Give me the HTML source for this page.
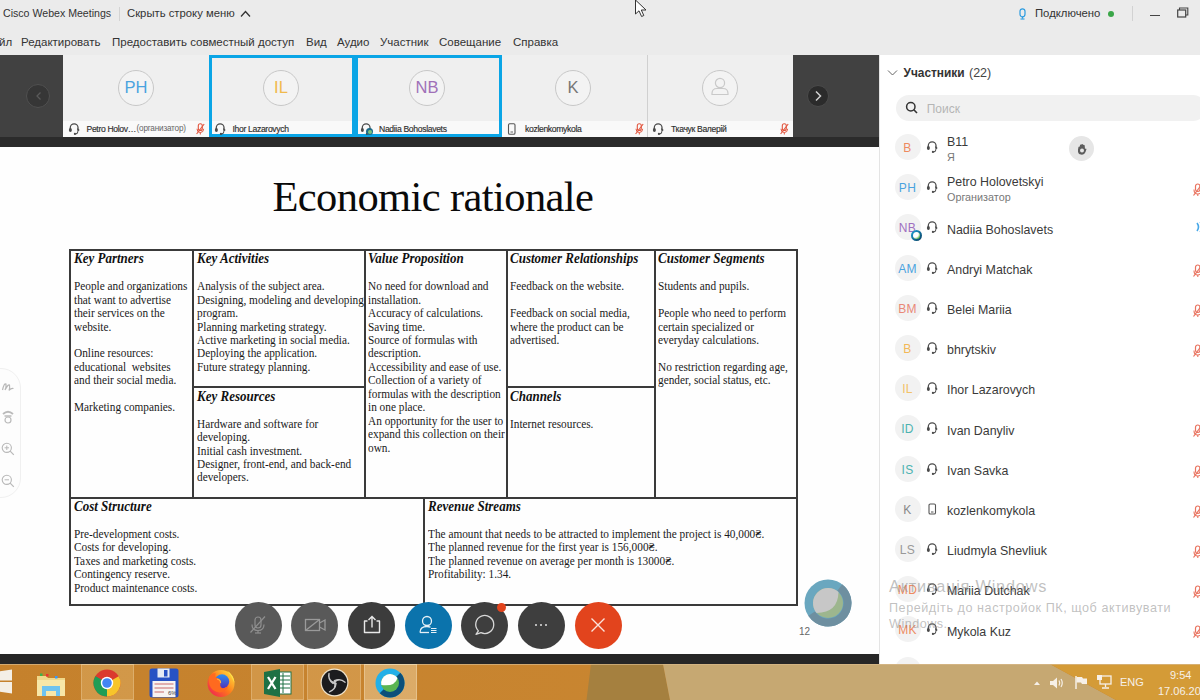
<!DOCTYPE html>
<html><head><meta charset="utf-8">
<style>
*{margin:0;padding:0;box-sizing:border-box}
html,body{width:1200px;height:700px;overflow:hidden;background:#ebebeb;font-family:"Liberation Sans",sans-serif;position:relative}
.a{position:absolute}
.t{position:absolute;white-space:nowrap;line-height:1}
/* title bar */
#titlebar{left:0;top:0;width:1200px;height:55px;background:#ebebeb}
/* thumbnails */
#strip{left:0;top:55px;width:879px;height:92px;background:#2b2b2b}
.thumb{position:absolute;top:0;height:82px;background:#efefef}
.thumb .lbl{position:absolute;left:0;right:0;bottom:0;height:16px;background:#f9f9f9}
.av{position:absolute;border-radius:50%;border:1px solid #c9c9c9;background:#f4f4f4;text-align:center;font-family:"Liberation Sans",sans-serif}
/* slide */
#slide{left:0;top:147px;width:879px;height:507px;background:#fefefe;overflow:hidden}
#bottomstrip{left:0;top:653.5px;width:879px;height:10.5px;background:#262626}
#panel{left:879px;top:55px;width:321px;height:609px;background:#fff;border-left:1px solid #e4e4e4}

.serif{font-family:"Liberation Serif",serif;color:#111}
.h{font:italic bold 13px/13px "Liberation Serif",serif;position:absolute;white-space:nowrap;color:#111;transform:scaleY(1.12);transform-origin:0 10.9px}
.b{font:11.3px/13px "Liberation Serif",serif;position:absolute;white-space:pre;color:#1a1a1a;transform:scaleY(1.1);transform-origin:0 10.31px}
.ln{position:absolute;background:#3a3a3a}
.btn{position:absolute;width:47px;height:47px;border-radius:50%}
.prow{position:absolute;left:0;width:321px;height:40px}
.pav{position:absolute;left:15px;width:26px;height:26px;border-radius:50%;background:#f2f2f2;text-align:center;font:12px/28.5px "Liberation Sans",sans-serif;letter-spacing:0.3px}
.pname{position:absolute;left:67px;font:12.6px "Liberation Sans",sans-serif;color:#333;white-space:nowrap}
</style></head><body>

<div id="titlebar" class="a">
  <div class="t" style="left:3px;top:8px;font-size:10.6px;color:#333">Cisco Webex Meetings</div>
  <div class="a" style="left:119px;top:6.5px;width:1px;height:14px;background:#d3d3d3"></div>
  <div class="t" style="left:127px;top:8px;font-size:11.3px;color:#333">Скрыть строку меню</div>
  <div class="t" style="left:-1px;top:37px;font-size:11.5px;color:#333">йл</div>
  <div class="t" style="left:21px;top:37px;font-size:11.5px;color:#333">Редактировать</div>
  <div class="t" style="left:112px;top:37px;font-size:11.5px;color:#333">Предоставить совместный доступ</div>
  <div class="t" style="left:306px;top:37px;font-size:11.5px;color:#333">Вид</div>
  <div class="t" style="left:337px;top:37px;font-size:11.5px;color:#333">Аудио</div>
  <div class="t" style="left:380px;top:37px;font-size:11.5px;color:#333">Участник</div>
  <div class="t" style="left:439px;top:37px;font-size:11.5px;color:#333">Совещание</div>
  <div class="t" style="left:513px;top:37px;font-size:11.5px;color:#333">Справка</div>
  <div class="t" style="left:1035px;top:8px;font-size:11.3px;color:#333">Подключено</div>
</div>

<div id="strip" class="a">
  <div class="thumb" style="left:63px;width:146px"><div class="lbl" style="height:16.5px"></div></div>
  <div class="thumb" style="left:209px;width:146px;border:3px solid #0aa5e6"><div class="lbl" style="height:13.5px"></div></div>
  <div class="thumb" style="left:355px;width:147px;border:3px solid #0aa5e6"><div class="lbl" style="height:13.5px"></div></div>
  <div class="thumb" style="left:502px;width:146px"><div class="lbl" style="height:16.5px"></div></div>
  <div class="thumb" style="left:648px;width:145px"><div class="lbl" style="height:16.5px"></div></div>
  <div class="a" style="left:793px;top:0;width:86px;height:82px;background:#414141"></div>
  <div class="a" style="left:0;top:0;width:63px;height:82px;background:#414141"></div>
</div>

<svg class="a" style="left:1018px;top:8px" width="9" height="12" viewBox="0 0 9 12"><rect x="2" y="0.8" width="5" height="8" rx="2.5" fill="none" stroke="#2a9be0" stroke-width="1.2"/><line x1="4.5" y1="8.8" x2="4.5" y2="10.6" stroke="#2a9be0" stroke-width="1.1"/><line x1="2.5" y1="11" x2="6.5" y2="11" stroke="#2a9be0" stroke-width="1.1"/></svg>
<div class="a" style="left:1108px;top:11px;width:6px;height:6px;border-radius:50%;background:#3aa648"></div>
<div class="a" style="left:1132px;top:6px;width:1px;height:15px;background:#d2d2d2"></div>
<div class="a" style="left:1149.5px;top:14.5px;width:10px;height:1.5px;background:#444"></div>
<svg class="a" style="left:1177px;top:6.5px" width="12" height="11" viewBox="0 0 12 11"><rect x="0.7" y="3" width="8" height="7" fill="none" stroke="#444" stroke-width="1.2"/><path d="M2.5 3 V1 H10.8 V8 H8.7" fill="none" stroke="#444" stroke-width="1.1"/></svg>
<svg class="a" style="left:240px;top:10px" width="11" height="8" viewBox="0 0 11 8"><path d="M1 6.5 L5.5 1.5 L10 6.5" fill="none" stroke="#333" stroke-width="1.3"/></svg>
<svg class="a" style="left:634px;top:-1px" width="14" height="20" viewBox="0 0 14 20"><path d="M1.5 1 L1.5 15 L5 11.8 L7.6 17.5 L9.8 16.5 L7.3 11 L12 11 Z" fill="#fff" stroke="#333" stroke-width="1"/></svg>
<div class="a" style="left:118px;top:69.5px;width:36px;height:36px;border-radius:50%;border:1.2px solid #c8c8c8;background:#f3f3f3"></div><div class="t" style="left:106px;width:60px;text-align:center;top:78.7px;font-size:16.5px;color:#4aa3df">PH</div>
<div class="a" style="left:263px;top:69.5px;width:36px;height:36px;border-radius:50%;border:1.2px solid #c8c8c8;background:#f3f3f3"></div><div class="t" style="left:251px;width:60px;text-align:center;top:78.7px;font-size:16.5px;color:#f0b94d">IL</div>
<div class="a" style="left:409px;top:69.5px;width:36px;height:36px;border-radius:50%;border:1.2px solid #c8c8c8;background:#f3f3f3"></div><div class="t" style="left:397px;width:60px;text-align:center;top:78.7px;font-size:16.5px;color:#a070b8">NB</div>
<div class="a" style="left:555px;top:69.5px;width:36px;height:36px;border-radius:50%;border:1.2px solid #c8c8c8;background:#f3f3f3"></div><div class="t" style="left:543px;width:60px;text-align:center;top:78.7px;font-size:16.5px;color:#777">K</div>
<div class="a" style="left:702px;top:69.5px;width:36px;height:36px;border-radius:50%;border:1.2px solid #c8c8c8;background:#f3f3f3"></div>
<svg class="a" style="left:708px;top:75px" width="24" height="24" viewBox="0 0 24 24"><circle cx="12" cy="8" r="4.6" fill="none" stroke="#c9c9c9" stroke-width="1.2"/><path d="M4 18.5 Q4 13.5 9 13.5 H15 Q20 13.5 20 18.5 V19.5 H4 Z" fill="none" stroke="#c9c9c9" stroke-width="1.2"/></svg>
<svg class="a" style="left:68.0px;top:122.0px" width="12" height="13" viewBox="0 0 12 13"><path d="M2.3 8.5 V5.6 A3.85 3.85 0 0 1 10 5.6 V8" fill="none" stroke="#4a4a4a" stroke-width="1.25"/><ellipse cx="2.4" cy="8" rx="1.5" ry="2.1" fill="#4a4a4a"/><path d="M9.4 6 L11.7 8 L9.4 10 Z" fill="#4a4a4a"/><path d="M10 9.5 Q9.6 11.8 7.2 12" fill="none" stroke="#4a4a4a" stroke-width="1.1"/><circle cx="6.9" cy="11.9" r="1.1" fill="#4a4a4a"/></svg><div class="t" style="left:86.5px;top:125px;font-size:8.6px;letter-spacing:-0.33px;color:#2e2e2e;-webkit-text-stroke:0.15px #2e2e2e">Petro Holov…</div>
<div class="t" style="left:136.5px;top:125px;font-size:8.2px;letter-spacing:-0.2px;color:#666">(организатор)</div>
<svg class="a" style="left:196px;top:123px" width="9" height="12" viewBox="0 0 9 12"><rect x="2.3" y="0.8" width="4" height="6.6" rx="2" fill="none" stroke="#e2563f" stroke-width="1.1"/><path d="M1 5.8 Q1 9.5 4.3 9.5 Q7.6 9.5 7.6 5.8" fill="none" stroke="#e2563f" stroke-width="1"/><line x1="4.3" y1="9.5" x2="4.3" y2="11.5" stroke="#e2563f" stroke-width="1"/><line x1="0.6" y1="11" x2="8.2" y2="1" stroke="#e2563f" stroke-width="1.1"/></svg>
<svg class="a" style="left:214.0px;top:122.0px" width="12" height="13" viewBox="0 0 12 13"><path d="M2.3 8.5 V5.6 A3.85 3.85 0 0 1 10 5.6 V8" fill="none" stroke="#4a4a4a" stroke-width="1.25"/><ellipse cx="2.4" cy="8" rx="1.5" ry="2.1" fill="#4a4a4a"/><path d="M9.4 6 L11.7 8 L9.4 10 Z" fill="#4a4a4a"/><path d="M10 9.5 Q9.6 11.8 7.2 12" fill="none" stroke="#4a4a4a" stroke-width="1.1"/><circle cx="6.9" cy="11.9" r="1.1" fill="#4a4a4a"/></svg><div class="t" style="left:232.5px;top:125px;font-size:8.6px;letter-spacing:-0.33px;color:#2e2e2e;-webkit-text-stroke:0.15px #2e2e2e">Ihor Lazarovych</div>

<svg class="a" style="left:360.0px;top:122.0px" width="12" height="13" viewBox="0 0 12 13"><path d="M2.3 8.5 V5.6 A3.85 3.85 0 0 1 10 5.6 V8" fill="none" stroke="#4a4a4a" stroke-width="1.25"/><ellipse cx="2.4" cy="8" rx="1.5" ry="2.1" fill="#4a4a4a"/><path d="M9.4 6 L11.7 8 L9.4 10 Z" fill="#4a4a4a"/><path d="M10 9.5 Q9.6 11.8 7.2 12" fill="none" stroke="#4a4a4a" stroke-width="1.1"/><circle cx="6.9" cy="11.9" r="1.1" fill="#4a4a4a"/></svg><div class="a" style="left:366px;top:128px;width:7px;height:7px;border-radius:50%;background:#1c6b8a"></div><div class="a" style="left:367.5px;top:129.5px;width:4px;height:4px;border-radius:50%;background:#7cc27c"></div><div class="t" style="left:379px;top:125px;font-size:8.6px;letter-spacing:-0.33px;color:#2e2e2e;-webkit-text-stroke:0.15px #2e2e2e">Nadiia Bohoslavets</div>

<svg class="a" style="left:507px;top:123px" width="10" height="12" viewBox="0 0 10 12"><rect x="1.5" y="0.8" width="6.5" height="10.4" rx="1.3" fill="none" stroke="#555" stroke-width="1.1"/><line x1="3.5" y1="9" x2="6" y2="9" stroke="#555" stroke-width="0.9"/></svg><div class="t" style="left:525px;top:125px;font-size:8.6px;letter-spacing:-0.33px;color:#2e2e2e;-webkit-text-stroke:0.15px #2e2e2e">kozlenkomykola</div>
<svg class="a" style="left:634.5px;top:123px" width="9" height="12" viewBox="0 0 9 12"><rect x="2.3" y="0.8" width="4" height="6.6" rx="2" fill="none" stroke="#e2563f" stroke-width="1.1"/><path d="M1 5.8 Q1 9.5 4.3 9.5 Q7.6 9.5 7.6 5.8" fill="none" stroke="#e2563f" stroke-width="1"/><line x1="4.3" y1="9.5" x2="4.3" y2="11.5" stroke="#e2563f" stroke-width="1"/><line x1="0.6" y1="11" x2="8.2" y2="1" stroke="#e2563f" stroke-width="1.1"/></svg>
<svg class="a" style="left:652.0px;top:122.0px" width="12" height="13" viewBox="0 0 12 13"><path d="M2.3 8.5 V5.6 A3.85 3.85 0 0 1 10 5.6 V8" fill="none" stroke="#4a4a4a" stroke-width="1.25"/><ellipse cx="2.4" cy="8" rx="1.5" ry="2.1" fill="#4a4a4a"/><path d="M9.4 6 L11.7 8 L9.4 10 Z" fill="#4a4a4a"/><path d="M10 9.5 Q9.6 11.8 7.2 12" fill="none" stroke="#4a4a4a" stroke-width="1.1"/><circle cx="6.9" cy="11.9" r="1.1" fill="#4a4a4a"/></svg><div class="t" style="left:671px;top:125px;font-size:8.6px;letter-spacing:-0.33px;color:#2e2e2e;-webkit-text-stroke:0.15px #2e2e2e">Ткачук Валерій</div>
<svg class="a" style="left:780px;top:123px" width="9" height="12" viewBox="0 0 9 12"><rect x="2.3" y="0.8" width="4" height="6.6" rx="2" fill="none" stroke="#e2563f" stroke-width="1.1"/><path d="M1 5.8 Q1 9.5 4.3 9.5 Q7.6 9.5 7.6 5.8" fill="none" stroke="#e2563f" stroke-width="1"/><line x1="4.3" y1="9.5" x2="4.3" y2="11.5" stroke="#e2563f" stroke-width="1"/><line x1="0.6" y1="11" x2="8.2" y2="1" stroke="#e2563f" stroke-width="1.1"/></svg>
<div class="a" style="left:647px;top:55px;width:1px;height:82px;background:#d0d0d0"></div>
<div class="a" style="left:26.3px;top:83.6px;width:24px;height:24px;border-radius:50%;background:#363636;border:1px solid #505050"></div><svg class="a" style="left:33.5px;top:91px" width="10" height="10" viewBox="0 0 10 10"><path d="M6.5 1.5 L3 5 L6.5 8.5" fill="none" stroke="#5a5a5a" stroke-width="1.3"/></svg>
<div class="a" style="left:806.5px;top:84.7px;width:22px;height:22px;border-radius:50%;background:#2b2b2b;border:1px solid #4a4a4a"></div><svg class="a" style="left:813px;top:91px" width="10" height="10" viewBox="0 0 10 10"><path d="M3 0.5 L7.5 5 L3 9.5" fill="none" stroke="#cfcfcf" stroke-width="1.5"/></svg>
<div id="slide" class="a">
</div>
<div id="sl">
<div class="t serif" style="left:272.5px;top:176.1px;font-size:42.5px;letter-spacing:-0.6px;color:#0a0a0a">Economic rationale</div>
<div class="ln" style="left:70px;top:249px;width:728px;height:2px"></div>
<div class="ln" style="left:70px;top:496.8px;width:728px;height:1.9px"></div>
<div class="ln" style="left:70px;top:604.3px;width:728px;height:1.9px"></div>
<div class="ln" style="left:69.4px;top:249px;width:1.9px;height:357px"></div>
<div class="ln" style="left:796px;top:249px;width:2px;height:357px"></div>
<div class="ln" style="left:192px;top:249px;width:2px;height:248px"></div>
<div class="ln" style="left:364px;top:249px;width:2px;height:248px"></div>
<div class="ln" style="left:506px;top:249px;width:2px;height:248px"></div>
<div class="ln" style="left:654px;top:249px;width:2px;height:248px"></div>
<div class="ln" style="left:423px;top:497px;width:2px;height:108px"></div>
<div class="ln" style="left:193px;top:386px;width:172px;height:1.6px"></div>
<div class="ln" style="left:507px;top:386px;width:148px;height:1.6px"></div>
<div class="h" style="left:74px;top:252.20px">Key Partners</div>
<div class="b" style="left:74px;top:280.19px">People and organizations</div>
<div class="b" style="left:74px;top:293.64px">that want to advertise</div>
<div class="b" style="left:74px;top:307.09px">their services on the</div>
<div class="b" style="left:74px;top:320.54px">website.</div>
<div class="b" style="left:74px;top:347.44px">Online resources:</div>
<div class="b" style="left:74px;top:360.89px">educational  websites</div>
<div class="b" style="left:74px;top:374.34px">and their social media.</div>
<div class="b" style="left:74px;top:401.24px">Marketing companies.</div>
<div class="h" style="left:197px;top:252.20px">Key Activities</div>
<div class="b" style="left:197px;top:280.19px">Analysis of the subject area.</div>
<div class="b" style="left:197px;top:293.64px">Designing, modeling and developing</div>
<div class="b" style="left:197px;top:307.09px">program.</div>
<div class="b" style="left:197px;top:320.54px">Planning marketing strategy.</div>
<div class="b" style="left:197px;top:333.99px">Active marketing in social media.</div>
<div class="b" style="left:197px;top:347.44px">Deploying the application.</div>
<div class="b" style="left:197px;top:360.89px">Future strategy planning.</div>
<div class="h" style="left:197px;top:389.60px">Key Resources</div>
<div class="b" style="left:197px;top:417.69px">Hardware and software for</div>
<div class="b" style="left:197px;top:431.14px">developing.</div>
<div class="b" style="left:197px;top:444.59px">Initial cash investment.</div>
<div class="b" style="left:197px;top:458.04px">Designer, front-end, and back-end</div>
<div class="b" style="left:197px;top:471.49px">developers.</div>
<div class="h" style="left:368px;top:252.20px">Value Proposition</div>
<div class="b" style="left:368px;top:280.19px">No need for download and</div>
<div class="b" style="left:368px;top:293.64px">installation.</div>
<div class="b" style="left:368px;top:307.09px">Accuracy of calculations.</div>
<div class="b" style="left:368px;top:320.54px">Saving time.</div>
<div class="b" style="left:368px;top:333.99px">Source of formulas with</div>
<div class="b" style="left:368px;top:347.44px">description.</div>
<div class="b" style="left:368px;top:360.89px">Accessibility and ease of use.</div>
<div class="b" style="left:368px;top:374.34px">Collection of a variety of</div>
<div class="b" style="left:368px;top:387.79px">formulas with the description</div>
<div class="b" style="left:368px;top:401.24px">in one place.</div>
<div class="b" style="left:368px;top:414.69px">An opportunity for the user to</div>
<div class="b" style="left:368px;top:428.14px">expand this collection on their</div>
<div class="b" style="left:368px;top:441.59px">own.</div>
<div class="h" style="left:510px;top:252.20px">Customer Relationships</div>
<div class="b" style="left:510px;top:280.19px">Feedback on the website.</div>
<div class="b" style="left:510px;top:307.09px">Feedback on social media,</div>
<div class="b" style="left:510px;top:320.54px">where the product can be</div>
<div class="b" style="left:510px;top:333.99px">advertised.</div>
<div class="h" style="left:510px;top:389.60px">Channels</div>
<div class="b" style="left:510px;top:417.69px">Internet resources.</div>
<div class="h" style="left:658px;top:252.20px">Customer Segments</div>
<div class="b" style="left:658px;top:280.19px">Students and pupils.</div>
<div class="b" style="left:658px;top:307.09px">People who need to perform</div>
<div class="b" style="left:658px;top:320.54px">certain specialized or</div>
<div class="b" style="left:658px;top:333.99px">everyday calculations.</div>
<div class="b" style="left:658px;top:360.89px">No restriction regarding age,</div>
<div class="b" style="left:658px;top:374.34px">gender, social status, etc.</div>
<div class="h" style="left:74px;top:499.80px">Cost Structure</div>
<div class="b" style="left:74px;top:527.89px">Pre-development costs.</div>
<div class="b" style="left:74px;top:541.34px">Costs for developing.</div>
<div class="b" style="left:74px;top:554.79px">Taxes and marketing costs.</div>
<div class="b" style="left:74px;top:568.24px">Contingency reserve.</div>
<div class="b" style="left:74px;top:581.69px">Product maintenance costs.</div>
<div class="h" style="left:428px;top:499.80px">Revenue Streams</div>
<div class="b" style="left:428px;top:527.89px">The amount that needs to be attracted to implement the project is 40,000₴.</div>
<div class="b" style="left:428px;top:541.34px">The planned revenue for the first year is 156,000₴.</div>
<div class="b" style="left:428px;top:554.79px">The planned revenue on average per month is 13000₴.</div>
<div class="b" style="left:428px;top:568.24px">Profitability: 1.34.</div>
<div class="t" style="left:799px;top:627px;font-size:10px;color:#666">12</div>
</div>
<div id="bottomstrip" class="a"></div>

<div id="panel" class="a">
</div>
<div id="pn">
<svg class="a" style="left:887px;top:69px" width="11" height="8" viewBox="0 0 11 8"><path d="M1 1.5 L5.5 6 L10 1.5" fill="none" stroke="#666" stroke-width="1"/></svg>
<div class="t" style="left:903.5px;top:67.6px;font-size:11.9px;font-weight:bold;color:#333">Участники</div><div class="t" style="left:969px;top:67.3px;font-size:12.5px;color:#444">(22)</div>
<div class="a" style="left:896px;top:95px;width:310px;height:26px;border-radius:13px;background:#f1f1f1"></div>
<svg class="a" style="left:905px;top:101px" width="14" height="14" viewBox="0 0 14 14"><circle cx="5.8" cy="5.8" r="4.2" fill="none" stroke="#333" stroke-width="1.5"/><line x1="8.8" y1="8.8" x2="12" y2="12" stroke="#333" stroke-width="1.6"/></svg>
<div class="t" style="left:926.7px;top:103px;font-size:12px;color:#b5b5b5">Поиск</div>
<div class="pav" style="left:894.5px;top:134.0px;color:#ee8a5f">B</div>
<svg class="a" style="left:925.5px;top:140.0px" width="12" height="13" viewBox="0 0 12 13"><path d="M2.3 8.5 V5.6 A3.85 3.85 0 0 1 10 5.6 V8" fill="none" stroke="#4a4a4a" stroke-width="1.25"/><ellipse cx="2.4" cy="8" rx="1.5" ry="2.1" fill="#4a4a4a"/><path d="M9.4 6 L11.7 8 L9.4 10 Z" fill="#4a4a4a"/><path d="M10 9.5 Q9.6 11.8 7.2 12" fill="none" stroke="#4a4a4a" stroke-width="1.1"/><circle cx="6.9" cy="11.9" r="1.1" fill="#4a4a4a"/></svg>
<div class="t" style="left:947px;top:135.6px;font-size:12.4px;color:#3a3a3a">B11</div>
<div class="t" style="left:947px;top:151.6px;font-size:10.8px;color:#777">Я</div>
<div class="pav" style="left:894.5px;top:174.2px;color:#4aa3df">PH</div>
<svg class="a" style="left:925.5px;top:180.0px" width="12" height="13" viewBox="0 0 12 13"><path d="M2.3 8.5 V5.6 A3.85 3.85 0 0 1 10 5.6 V8" fill="none" stroke="#4a4a4a" stroke-width="1.25"/><ellipse cx="2.4" cy="8" rx="1.5" ry="2.1" fill="#4a4a4a"/><path d="M9.4 6 L11.7 8 L9.4 10 Z" fill="#4a4a4a"/><path d="M10 9.5 Q9.6 11.8 7.2 12" fill="none" stroke="#4a4a4a" stroke-width="1.1"/><circle cx="6.9" cy="11.9" r="1.1" fill="#4a4a4a"/></svg>
<div class="t" style="left:947px;top:175.8px;font-size:12.4px;color:#3a3a3a">Petro Holovetskyi</div>
<div class="t" style="left:947px;top:191.8px;font-size:10.8px;color:#777">Организатор</div>
<svg class="a" style="left:1193px;top:183px" width="10" height="14" viewBox="0 0 10 14"><rect x="2.5" y="1" width="4.5" height="7.5" rx="2.2" fill="none" stroke="#e9735f" stroke-width="1.2"/><path d="M1 6.5 Q1 11 4.8 11 Q8.5 11 8.5 6.5" fill="none" stroke="#e9735f" stroke-width="1.1"/><line x1="4.8" y1="11" x2="4.8" y2="13" stroke="#e9735f" stroke-width="1.1"/><line x1="0.5" y1="12.5" x2="9" y2="1" stroke="#e9735f" stroke-width="1.2"/></svg>
<div class="pav" style="left:894.5px;top:214.4px;color:#a070c0">NB</div>
<svg class="a" style="left:925.5px;top:220.0px" width="12" height="13" viewBox="0 0 12 13"><path d="M2.3 8.5 V5.6 A3.85 3.85 0 0 1 10 5.6 V8" fill="none" stroke="#4a4a4a" stroke-width="1.25"/><ellipse cx="2.4" cy="8" rx="1.5" ry="2.1" fill="#4a4a4a"/><path d="M9.4 6 L11.7 8 L9.4 10 Z" fill="#4a4a4a"/><path d="M10 9.5 Q9.6 11.8 7.2 12" fill="none" stroke="#4a4a4a" stroke-width="1.1"/><circle cx="6.9" cy="11.9" r="1.1" fill="#4a4a4a"/></svg>
<div class="t" style="left:947px;top:223.6px;font-size:12.4px;color:#3a3a3a">Nadiia Bohoslavets</div>
<svg class="a" style="left:1195px;top:221px" width="8" height="12" viewBox="0 0 8 12"><path d="M2 2 Q5 6 2 10" fill="none" stroke="#48a8e8" stroke-width="1.6"/><path d="M5 1 Q8.5 6 5 11" fill="none" stroke="#48a8e8" stroke-width="1.3"/></svg>
<div class="pav" style="left:894.5px;top:254.6px;color:#4aa3df">AM</div>
<svg class="a" style="left:925.5px;top:261.0px" width="12" height="13" viewBox="0 0 12 13"><path d="M2.3 8.5 V5.6 A3.85 3.85 0 0 1 10 5.6 V8" fill="none" stroke="#4a4a4a" stroke-width="1.25"/><ellipse cx="2.4" cy="8" rx="1.5" ry="2.1" fill="#4a4a4a"/><path d="M9.4 6 L11.7 8 L9.4 10 Z" fill="#4a4a4a"/><path d="M10 9.5 Q9.6 11.8 7.2 12" fill="none" stroke="#4a4a4a" stroke-width="1.1"/><circle cx="6.9" cy="11.9" r="1.1" fill="#4a4a4a"/></svg>
<div class="t" style="left:947px;top:263.8px;font-size:12.4px;color:#3a3a3a">Andryi Matchak</div>
<svg class="a" style="left:1193px;top:264px" width="10" height="14" viewBox="0 0 10 14"><rect x="2.5" y="1" width="4.5" height="7.5" rx="2.2" fill="none" stroke="#e9735f" stroke-width="1.2"/><path d="M1 6.5 Q1 11 4.8 11 Q8.5 11 8.5 6.5" fill="none" stroke="#e9735f" stroke-width="1.1"/><line x1="4.8" y1="11" x2="4.8" y2="13" stroke="#e9735f" stroke-width="1.1"/><line x1="0.5" y1="12.5" x2="9" y2="1" stroke="#e9735f" stroke-width="1.2"/></svg>
<div class="pav" style="left:894.5px;top:294.8px;color:#e98877">BM</div>
<svg class="a" style="left:925.5px;top:301.0px" width="12" height="13" viewBox="0 0 12 13"><path d="M2.3 8.5 V5.6 A3.85 3.85 0 0 1 10 5.6 V8" fill="none" stroke="#4a4a4a" stroke-width="1.25"/><ellipse cx="2.4" cy="8" rx="1.5" ry="2.1" fill="#4a4a4a"/><path d="M9.4 6 L11.7 8 L9.4 10 Z" fill="#4a4a4a"/><path d="M10 9.5 Q9.6 11.8 7.2 12" fill="none" stroke="#4a4a4a" stroke-width="1.1"/><circle cx="6.9" cy="11.9" r="1.1" fill="#4a4a4a"/></svg>
<div class="t" style="left:947px;top:304.0px;font-size:12.4px;color:#3a3a3a">Belei Mariia</div>
<svg class="a" style="left:1193px;top:304px" width="10" height="14" viewBox="0 0 10 14"><rect x="2.5" y="1" width="4.5" height="7.5" rx="2.2" fill="none" stroke="#e9735f" stroke-width="1.2"/><path d="M1 6.5 Q1 11 4.8 11 Q8.5 11 8.5 6.5" fill="none" stroke="#e9735f" stroke-width="1.1"/><line x1="4.8" y1="11" x2="4.8" y2="13" stroke="#e9735f" stroke-width="1.1"/><line x1="0.5" y1="12.5" x2="9" y2="1" stroke="#e9735f" stroke-width="1.2"/></svg>
<div class="pav" style="left:894.5px;top:335.0px;color:#f2b857">B</div>
<svg class="a" style="left:925.5px;top:341.0px" width="12" height="13" viewBox="0 0 12 13"><path d="M2.3 8.5 V5.6 A3.85 3.85 0 0 1 10 5.6 V8" fill="none" stroke="#4a4a4a" stroke-width="1.25"/><ellipse cx="2.4" cy="8" rx="1.5" ry="2.1" fill="#4a4a4a"/><path d="M9.4 6 L11.7 8 L9.4 10 Z" fill="#4a4a4a"/><path d="M10 9.5 Q9.6 11.8 7.2 12" fill="none" stroke="#4a4a4a" stroke-width="1.1"/><circle cx="6.9" cy="11.9" r="1.1" fill="#4a4a4a"/></svg>
<div class="t" style="left:947px;top:344.2px;font-size:12.4px;color:#3a3a3a">bhrytskiv</div>
<svg class="a" style="left:1193px;top:344px" width="10" height="14" viewBox="0 0 10 14"><rect x="2.5" y="1" width="4.5" height="7.5" rx="2.2" fill="none" stroke="#e9735f" stroke-width="1.2"/><path d="M1 6.5 Q1 11 4.8 11 Q8.5 11 8.5 6.5" fill="none" stroke="#e9735f" stroke-width="1.1"/><line x1="4.8" y1="11" x2="4.8" y2="13" stroke="#e9735f" stroke-width="1.1"/><line x1="0.5" y1="12.5" x2="9" y2="1" stroke="#e9735f" stroke-width="1.2"/></svg>
<div class="pav" style="left:894.5px;top:375.2px;color:#f2c268">IL</div>
<svg class="a" style="left:925.5px;top:381.0px" width="12" height="13" viewBox="0 0 12 13"><path d="M2.3 8.5 V5.6 A3.85 3.85 0 0 1 10 5.6 V8" fill="none" stroke="#4a4a4a" stroke-width="1.25"/><ellipse cx="2.4" cy="8" rx="1.5" ry="2.1" fill="#4a4a4a"/><path d="M9.4 6 L11.7 8 L9.4 10 Z" fill="#4a4a4a"/><path d="M10 9.5 Q9.6 11.8 7.2 12" fill="none" stroke="#4a4a4a" stroke-width="1.1"/><circle cx="6.9" cy="11.9" r="1.1" fill="#4a4a4a"/></svg>
<div class="t" style="left:947px;top:384.4px;font-size:12.4px;color:#3a3a3a">Ihor Lazarovych</div>
<div class="pav" style="left:894.5px;top:415.4px;color:#4db3b0">ID</div>
<svg class="a" style="left:925.5px;top:421.0px" width="12" height="13" viewBox="0 0 12 13"><path d="M2.3 8.5 V5.6 A3.85 3.85 0 0 1 10 5.6 V8" fill="none" stroke="#4a4a4a" stroke-width="1.25"/><ellipse cx="2.4" cy="8" rx="1.5" ry="2.1" fill="#4a4a4a"/><path d="M9.4 6 L11.7 8 L9.4 10 Z" fill="#4a4a4a"/><path d="M10 9.5 Q9.6 11.8 7.2 12" fill="none" stroke="#4a4a4a" stroke-width="1.1"/><circle cx="6.9" cy="11.9" r="1.1" fill="#4a4a4a"/></svg>
<div class="t" style="left:947px;top:424.6px;font-size:12.4px;color:#3a3a3a">Ivan Danyliv</div>
<svg class="a" style="left:1193px;top:424px" width="10" height="14" viewBox="0 0 10 14"><rect x="2.5" y="1" width="4.5" height="7.5" rx="2.2" fill="none" stroke="#e9735f" stroke-width="1.2"/><path d="M1 6.5 Q1 11 4.8 11 Q8.5 11 8.5 6.5" fill="none" stroke="#e9735f" stroke-width="1.1"/><line x1="4.8" y1="11" x2="4.8" y2="13" stroke="#e9735f" stroke-width="1.1"/><line x1="0.5" y1="12.5" x2="9" y2="1" stroke="#e9735f" stroke-width="1.2"/></svg>
<div class="pav" style="left:894.5px;top:455.6px;color:#4db3b0">IS</div>
<svg class="a" style="left:925.5px;top:462.0px" width="12" height="13" viewBox="0 0 12 13"><path d="M2.3 8.5 V5.6 A3.85 3.85 0 0 1 10 5.6 V8" fill="none" stroke="#4a4a4a" stroke-width="1.25"/><ellipse cx="2.4" cy="8" rx="1.5" ry="2.1" fill="#4a4a4a"/><path d="M9.4 6 L11.7 8 L9.4 10 Z" fill="#4a4a4a"/><path d="M10 9.5 Q9.6 11.8 7.2 12" fill="none" stroke="#4a4a4a" stroke-width="1.1"/><circle cx="6.9" cy="11.9" r="1.1" fill="#4a4a4a"/></svg>
<div class="t" style="left:947px;top:464.8px;font-size:12.4px;color:#3a3a3a">Ivan Savka</div>
<svg class="a" style="left:1193px;top:465px" width="10" height="14" viewBox="0 0 10 14"><rect x="2.5" y="1" width="4.5" height="7.5" rx="2.2" fill="none" stroke="#e9735f" stroke-width="1.2"/><path d="M1 6.5 Q1 11 4.8 11 Q8.5 11 8.5 6.5" fill="none" stroke="#e9735f" stroke-width="1.1"/><line x1="4.8" y1="11" x2="4.8" y2="13" stroke="#e9735f" stroke-width="1.1"/><line x1="0.5" y1="12.5" x2="9" y2="1" stroke="#e9735f" stroke-width="1.2"/></svg>
<div class="pav" style="left:894.5px;top:495.8px;color:#888888">K</div>
<svg class="a" style="left:925.5px;top:503px" width="12" height="12" viewBox="0 0 12 12"><rect x="3" y="1" width="6.5" height="10" rx="1.3" fill="none" stroke="#555" stroke-width="1.1"/><line x1="5" y1="9" x2="7.5" y2="9" stroke="#555" stroke-width="1"/></svg>
<div class="t" style="left:947px;top:505.0px;font-size:12.4px;color:#3a3a3a">kozlenkomykola</div>
<svg class="a" style="left:1193px;top:505px" width="10" height="14" viewBox="0 0 10 14"><rect x="2.5" y="1" width="4.5" height="7.5" rx="2.2" fill="none" stroke="#e9735f" stroke-width="1.2"/><path d="M1 6.5 Q1 11 4.8 11 Q8.5 11 8.5 6.5" fill="none" stroke="#e9735f" stroke-width="1.1"/><line x1="4.8" y1="11" x2="4.8" y2="13" stroke="#e9735f" stroke-width="1.1"/><line x1="0.5" y1="12.5" x2="9" y2="1" stroke="#e9735f" stroke-width="1.2"/></svg>
<div class="pav" style="left:894.5px;top:536.0px;color:#999999">LS</div>
<svg class="a" style="left:925.5px;top:542.0px" width="12" height="13" viewBox="0 0 12 13"><path d="M2.3 8.5 V5.6 A3.85 3.85 0 0 1 10 5.6 V8" fill="none" stroke="#4a4a4a" stroke-width="1.25"/><ellipse cx="2.4" cy="8" rx="1.5" ry="2.1" fill="#4a4a4a"/><path d="M9.4 6 L11.7 8 L9.4 10 Z" fill="#4a4a4a"/><path d="M10 9.5 Q9.6 11.8 7.2 12" fill="none" stroke="#4a4a4a" stroke-width="1.1"/><circle cx="6.9" cy="11.9" r="1.1" fill="#4a4a4a"/></svg>
<div class="t" style="left:947px;top:545.2px;font-size:12.4px;color:#3a3a3a">Liudmyla Shevliuk</div>
<svg class="a" style="left:1193px;top:545px" width="10" height="14" viewBox="0 0 10 14"><rect x="2.5" y="1" width="4.5" height="7.5" rx="2.2" fill="none" stroke="#e9735f" stroke-width="1.2"/><path d="M1 6.5 Q1 11 4.8 11 Q8.5 11 8.5 6.5" fill="none" stroke="#e9735f" stroke-width="1.1"/><line x1="4.8" y1="11" x2="4.8" y2="13" stroke="#e9735f" stroke-width="1.1"/><line x1="0.5" y1="12.5" x2="9" y2="1" stroke="#e9735f" stroke-width="1.2"/></svg>
<div class="pav" style="left:894.5px;top:576.2px;color:#ee8a5f">MD</div>
<svg class="a" style="left:925.5px;top:582.0px" width="12" height="13" viewBox="0 0 12 13"><path d="M2.3 8.5 V5.6 A3.85 3.85 0 0 1 10 5.6 V8" fill="none" stroke="#4a4a4a" stroke-width="1.25"/><ellipse cx="2.4" cy="8" rx="1.5" ry="2.1" fill="#4a4a4a"/><path d="M9.4 6 L11.7 8 L9.4 10 Z" fill="#4a4a4a"/><path d="M10 9.5 Q9.6 11.8 7.2 12" fill="none" stroke="#4a4a4a" stroke-width="1.1"/><circle cx="6.9" cy="11.9" r="1.1" fill="#4a4a4a"/></svg>
<div class="t" style="left:947px;top:585.4px;font-size:12.4px;color:#3a3a3a">Mariia Dutchak</div>
<svg class="a" style="left:1193px;top:585px" width="10" height="14" viewBox="0 0 10 14"><rect x="2.5" y="1" width="4.5" height="7.5" rx="2.2" fill="none" stroke="#e9735f" stroke-width="1.2"/><path d="M1 6.5 Q1 11 4.8 11 Q8.5 11 8.5 6.5" fill="none" stroke="#e9735f" stroke-width="1.1"/><line x1="4.8" y1="11" x2="4.8" y2="13" stroke="#e9735f" stroke-width="1.1"/><line x1="0.5" y1="12.5" x2="9" y2="1" stroke="#e9735f" stroke-width="1.2"/></svg>
<div class="pav" style="left:894.5px;top:616.4px;color:#ee8a5f">MK</div>
<svg class="a" style="left:925.5px;top:622.0px" width="12" height="13" viewBox="0 0 12 13"><path d="M2.3 8.5 V5.6 A3.85 3.85 0 0 1 10 5.6 V8" fill="none" stroke="#4a4a4a" stroke-width="1.25"/><ellipse cx="2.4" cy="8" rx="1.5" ry="2.1" fill="#4a4a4a"/><path d="M9.4 6 L11.7 8 L9.4 10 Z" fill="#4a4a4a"/><path d="M10 9.5 Q9.6 11.8 7.2 12" fill="none" stroke="#4a4a4a" stroke-width="1.1"/><circle cx="6.9" cy="11.9" r="1.1" fill="#4a4a4a"/></svg>
<div class="t" style="left:947px;top:625.6px;font-size:12.4px;color:#3a3a3a">Mykola Kuz</div>
<svg class="a" style="left:1193px;top:625px" width="10" height="14" viewBox="0 0 10 14"><rect x="2.5" y="1" width="4.5" height="7.5" rx="2.2" fill="none" stroke="#e9735f" stroke-width="1.2"/><path d="M1 6.5 Q1 11 4.8 11 Q8.5 11 8.5 6.5" fill="none" stroke="#e9735f" stroke-width="1.1"/><line x1="4.8" y1="11" x2="4.8" y2="13" stroke="#e9735f" stroke-width="1.1"/><line x1="0.5" y1="12.5" x2="9" y2="1" stroke="#e9735f" stroke-width="1.2"/></svg>
<div class="pav" style="left:894.5px;top:656.6px;color:#ee8a5f"></div>
<svg class="a" style="left:925.5px;top:663.0px" width="12" height="13" viewBox="0 0 12 13"><path d="M2.3 8.5 V5.6 A3.85 3.85 0 0 1 10 5.6 V8" fill="none" stroke="#4a4a4a" stroke-width="1.25"/><ellipse cx="2.4" cy="8" rx="1.5" ry="2.1" fill="#4a4a4a"/><path d="M9.4 6 L11.7 8 L9.4 10 Z" fill="#4a4a4a"/><path d="M10 9.5 Q9.6 11.8 7.2 12" fill="none" stroke="#4a4a4a" stroke-width="1.1"/><circle cx="6.9" cy="11.9" r="1.1" fill="#4a4a4a"/></svg>
<div class="t" style="left:947px;top:665.8px;font-size:12.4px;color:#3a3a3a"></div>
<div class="a" style="left:1068.5px;top:136px;width:25px;height:25px;border-radius:50%;background:#e6e6e6"></div>
<svg class="a" style="left:1076px;top:142.5px" width="12" height="13" viewBox="0 0 12 13"><path d="M3 11 Q1.5 9 2 6.5 L2.5 4 Q3 3 3.8 3.8 L4 2 Q4.5 1 5.3 1.8 L5.5 1.3 Q6.3 0.5 7 1.5 L7.3 2 Q8.2 1.5 8.7 2.5 L9 6 Q9.8 5.2 10.5 6 L9.5 9 Q8.5 11.5 6 11.8 Z" fill="#5c5c5c"/><circle cx="6" cy="7.5" r="2" fill="#e6e6e6"/></svg>
<div class="a" style="left:910.5px;top:229.6px;width:11px;height:11px;border-radius:50%;background:linear-gradient(135deg,#1ea6dc,#083a5c)"></div>
<div class="a" style="left:912.5px;top:231.6px;width:7px;height:7px;border-radius:50%;background:radial-gradient(circle at 30% 30%,#ffffff 45%,#6cbf5a 75%)"></div>
<div class="t" style="left:889px;top:578px;font-size:16.3px;letter-spacing:0.8px;color:rgba(140,140,140,0.55)">Активація Windows</div>
<div class="t" style="left:889px;top:601.5px;font-size:12.6px;letter-spacing:0.55px;color:rgba(140,140,140,0.55)">Перейдіть до настройок ПК, щоб активувати</div>
<div class="t" style="left:889px;top:618px;font-size:12.6px;letter-spacing:0.5px;color:rgba(140,140,140,0.55)">Windows.</div>
</div>

<svg id="taskbar" class="a" style="left:0;top:664px" width="1200" height="36" viewBox="0 0 1200 36"><defs><linearGradient id="og" x1="0" x2="1"><stop offset="0" stop-color="#c5812c"/><stop offset="0.6" stop-color="#c98631"/><stop offset="1" stop-color="#c4802d"/></linearGradient></defs><rect width="1200" height="36" fill="url(#og)"/><polygon points="591,0 663,0 670,36 586.5,36" fill="#a5803f"/><polygon points="663,0 1050,0 1116,36 670,36" fill="#c6a872"/><polygon points="1050,0 1200,0 1200,36 1116,36" fill="#d49b37"/><rect width="1200" height="1" fill="#d9b98a" opacity="0.7"/></svg>

<div class="a" style="left:-20px;top:368px;width:41px;height:130px;border-radius:20px;background:#fdfdfd;border:1px solid #f0f0f0"></div>
<svg class="a" style="left:1px;top:381px" width="14" height="12" viewBox="0 0 14 12"><path d="M1.5 9 Q3 2 5 3 Q5.5 6 4 9 Q7 3 8.5 4 Q9 7 8 9.5 Q10 7 12.5 7.5" fill="none" stroke="#b8b8b8" stroke-width="1.2"/></svg>
<svg class="a" style="left:2px;top:410px" width="12" height="14" viewBox="0 0 12 14"><path d="M1 4 Q6 -0.5 11 4" fill="none" stroke="#bbb" stroke-width="1.8"/><path d="M2.5 6 H9.5" stroke="#bbb" stroke-width="1.5"/><rect x="3" y="7" width="6" height="6" rx="3" fill="none" stroke="#bbb" stroke-width="1.2"/></svg>
<svg class="a" style="left:1px;top:442px" width="14" height="14" viewBox="0 0 14 14"><circle cx="5.8" cy="5.8" r="4.6" fill="none" stroke="#b8b8b8" stroke-width="1.1"/><path d="M3.6 5.8 H8 M5.8 3.6 V8" stroke="#b8b8b8" stroke-width="1"/><line x1="9.2" y1="9.2" x2="12.8" y2="12.8" stroke="#b8b8b8" stroke-width="1.2"/></svg>
<svg class="a" style="left:1px;top:474px" width="14" height="14" viewBox="0 0 14 14"><circle cx="5.8" cy="5.8" r="4.6" fill="none" stroke="#b8b8b8" stroke-width="1.1"/><path d="M3.6 5.8 H8" stroke="#b8b8b8" stroke-width="1"/><line x1="9.2" y1="9.2" x2="12.8" y2="12.8" stroke="#b8b8b8" stroke-width="1.2"/></svg>
<div class="btn" style="left:234.8px;top:601.5px;background:#595959"></div><svg class="a" style="left:244.3px;top:611px" width="28" height="28" viewBox="0 0 28 28"><rect x="11" y="6" width="6" height="11" rx="3" fill="none" stroke="#8f8f8f" stroke-width="1.2"/><path d="M8 13.5 Q8 19.5 14 19.5 Q20 19.5 20 13.5" fill="none" stroke="#8f8f8f" stroke-width="1.2"/><line x1="14" y1="19.5" x2="14" y2="22" stroke="#8f8f8f" stroke-width="1.2"/><line x1="11" y1="22" x2="17" y2="22" stroke="#8f8f8f" stroke-width="1.2"/><line x1="6.5" y1="21.5" x2="21" y2="5.5" stroke="#8f8f8f" stroke-width="1.2"/></svg>
<div class="btn" style="left:291.3px;top:601.5px;background:#595959"></div><svg class="a" style="left:300.8px;top:611px" width="28" height="28" viewBox="0 0 28 28"><rect x="4.5" y="8.5" width="14" height="11" fill="none" stroke="#9a9a9a" stroke-width="1.3"/><path d="M18.5 12 L24 9 V19 L18.5 16" fill="none" stroke="#9a9a9a" stroke-width="1.3"/><line x1="4.5" y1="19.5" x2="18.5" y2="8.5" stroke="#9a9a9a" stroke-width="1.3"/></svg>
<div class="btn" style="left:348.0px;top:601.5px;background:#3c3c3c"></div><svg class="a" style="left:357.5px;top:611px" width="28" height="28" viewBox="0 0 28 28"><path d="M9.5 10 H6.5 V21.5 H21.5 V10 H18.5" fill="none" stroke="#e8e8e8" stroke-width="1.4" stroke-linejoin="round"/><path d="M14 16.5 V5.5 M10.5 9 L14 5.5 L17.5 9" fill="none" stroke="#e8e8e8" stroke-width="1.4"/></svg>
<div class="btn" style="left:404.5px;top:601.5px;background:#0b73ac"></div><svg class="a" style="left:414px;top:611px" width="28" height="28" viewBox="0 0 28 28"><circle cx="13" cy="10" r="4.5" fill="none" stroke="#e6f0f6" stroke-width="1.3"/><path d="M6 21.5 Q6 15.5 13 15.5 Q15 15.5 16.5 16.3" fill="none" stroke="#e6f0f6" stroke-width="1.3"/><path d="M6 21.5 H15" stroke="#e6f0f6" stroke-width="1.3"/><path d="M17 17.5 H22.5 M17 19.5 H22.5 M17 21.5 H22.5" stroke="#e6f0f6" stroke-width="1.1"/></svg>
<div class="btn" style="left:461.2px;top:601.5px;background:#3e3e3e"></div><svg class="a" style="left:470.7px;top:611px" width="28" height="28" viewBox="0 0 28 28"><path d="M7.4 19.9 A9 9 0 1 1 10 21.7 L5 23.3 Z" fill="none" stroke="#d8d8d8" stroke-width="1.3" stroke-linejoin="round"/></svg>
<div class="btn" style="left:517.9px;top:601.5px;background:#3e3e3e"></div><svg class="a" style="left:527.4px;top:611px" width="28" height="28" viewBox="0 0 28 28"><circle cx="9" cy="14" r="1" fill="#e0e0e0"/><circle cx="14" cy="14" r="1" fill="#e0e0e0"/><circle cx="19" cy="14" r="1" fill="#e0e0e0"/></svg>
<div class="btn" style="left:574.5px;top:601.5px;background:#e2441d"></div><svg class="a" style="left:584px;top:611px" width="28" height="28" viewBox="0 0 28 28"><path d="M7.5 7.5 L20.5 20.5 M20.5 7.5 L7.5 20.5" stroke="#fbe3dc" stroke-width="1.4"/></svg>
<div class="a" style="left:497px;top:603px;width:9px;height:9px;border-radius:50%;background:#e2441d"></div>
<svg class="a" style="left:803px;top:578px" width="50" height="50" viewBox="0 0 50 50"><circle cx="25" cy="25" r="23.5" fill="#6aa7bf"/><path d="M39.2 6.3 A23.5 23.5 0 1 1 5.3 37.8 L12 33.4 A15.5 15.5 0 1 0 34.4 12.7 Z" fill="#6e8fa0"/><circle cx="25" cy="25" r="15" fill="#9db68e"/><path d="M13.6 35 A15.2 15.2 0 0 1 35.5 14 Q35 34.65 13.6 35 Z" fill="#c7c7c7"/></svg>
<div class="a" style="left:81px;top:664px;width:53px;height:36px;background:rgba(255,232,175,0.22);border:1px solid rgba(255,240,210,0.25)"></div>
<div class="a" style="left:251px;top:664px;width:53px;height:36px;background:rgba(255,232,175,0.2);border:1px solid rgba(255,240,210,0.25)"></div>
<div class="a" style="left:307px;top:664px;width:54px;height:36px;background:rgba(255,232,175,0.2);border:1px solid rgba(255,240,210,0.25)"></div>
<div class="a" style="left:364px;top:664px;width:53px;height:36px;background:rgba(255,240,205,0.36);border:1px solid rgba(255,245,220,0.3)"></div>
<svg class="a" style="left:-6px;top:669px" width="20" height="25" viewBox="0 0 20 25"><path d="M0 3 L18 0.5 V11.5 H0 Z M0 13 H18 V24.5 L0 22 Z" fill="#f4efe6"/></svg>
<svg class="a" style="left:36px;top:670px" width="30" height="28" viewBox="0 0 30 28"><path d="M1 6 H10 L12 8 H29 V26 H1 Z" fill="#efd88a"/><rect x="1" y="10" width="28" height="16" fill="#f7e7a8"/><rect x="4" y="3.5" width="2.5" height="2.5" fill="#3cb44a"/><rect x="10" y="4" width="2.5" height="2.5" fill="#e33"/><rect x="19" y="6" width="2.5" height="2.5" fill="#39f"/><path d="M6 16 H24 V26 H20 V21 H10 V26 H6 Z" fill="#6ec3f0"/></svg>
<svg class="a" style="left:93px;top:669px" width="28" height="28" viewBox="0 0 28 28"><circle cx="14" cy="14" r="13.5" fill="#db3a2e"/><path d="M14 14 L2.3 7.25 A13.5 13.5 0 0 0 14 27.5 Z" fill="#1f9d55"/><path d="M14 14 L14 27.5 A13.5 13.5 0 0 0 25.7 7.25 Z" fill="#f7c52b"/><path d="M14 14 L2.3 7.25 L8 17 Z" fill="#1f9d55"/><circle cx="14" cy="14" r="6.2" fill="#fff"/><circle cx="14" cy="14" r="4.8" fill="#4285f4"/></svg>
<svg class="a" style="left:149px;top:667.5px" width="30" height="30" viewBox="0 0 30 30"><rect x="0.5" y="0.5" width="29" height="29" rx="2.5" fill="#2752c4"/><rect x="8.5" y="0.5" width="12" height="9" fill="#e6ebf3"/><rect x="15" y="2" width="3.5" height="6.5" fill="#2752c4"/><rect x="3.5" y="13" width="23" height="16" fill="#f7f3f2"/><path d="M5.5 16 H24.5 M5.5 20 H24.5 M5.5 24 H15" stroke="#c96b6b" stroke-width="1.1"/><text x="19" y="27" font-size="6" font-family="Liberation Sans" fill="#444">6%</text></svg>
<svg class="a" style="left:206px;top:668px" width="30" height="30" viewBox="0 0 30 30"><defs><linearGradient id="ffg" x1="0.1" y1="0.9" x2="0.9" y2="0.1"><stop offset="0" stop-color="#f0274f"/><stop offset="0.5" stop-color="#ff7a1a"/><stop offset="1" stop-color="#ffd83c"/></linearGradient><linearGradient id="ffb" x1="0" y1="0" x2="0" y2="1"><stop offset="0" stop-color="#2a8ff0"/><stop offset="1" stop-color="#5330b8"/></linearGradient></defs><circle cx="15" cy="15.5" r="13.5" fill="url(#ffg)"/><path d="M21 2.5 Q28 7 28.5 15 Q26 8 21 2.5 Z" fill="#ffe14a"/><circle cx="16" cy="13.5" r="7.2" fill="url(#ffb)"/><path d="M3 9 Q6 4 10 5.5 Q8 8 10.5 10 Q14 10 15 14 Q13 18 16 20 Q20 21 22.5 17 Q21 24 14 24.5 Q6 24 3.5 17 Q2.5 12 3 9 Z" fill="#ff6a1f"/><path d="M11 11 Q15 12 14.5 15" fill="none" stroke="#ffb13b" stroke-width="1.2"/></svg>
<svg class="a" style="left:263px;top:668px" width="30" height="30" viewBox="0 0 30 30"><rect x="12" y="4" width="16" height="22" fill="#fff" stroke="#1e7145" stroke-width="1"/><path d="M14 8 H27 M14 12 H27 M14 16 H27 M14 20 H27 M20 5 V25" stroke="#1e7145" stroke-width="1"/><path d="M1 4 L17 1 V29 L1 26 Z" fill="#1e7145"/><path d="M5 9 L12.5 21 M12.5 9 L5 21" stroke="#fff" stroke-width="2.3"/></svg>
<svg class="a" style="left:320px;top:668px" width="29" height="29" viewBox="0 0 29 29"><circle cx="14.5" cy="14.5" r="14" fill="#f0e4cc"/><circle cx="14.5" cy="14.5" r="12.8" fill="#1c1c1e"/><g transform="rotate(0 14.5 14.5)"><path d="M14.5 14.5 Q8 13.5 9 5.5 Q7.5 11.5 13 15.5 Z" fill="#c8c8c8" stroke="#c8c8c8" stroke-width="1.3" stroke-linejoin="round"/></g><g transform="rotate(120 14.5 14.5)"><path d="M14.5 14.5 Q8 13.5 9 5.5 Q7.5 11.5 13 15.5 Z" fill="#c8c8c8" stroke="#c8c8c8" stroke-width="1.3" stroke-linejoin="round"/></g><g transform="rotate(240 14.5 14.5)"><path d="M14.5 14.5 Q8 13.5 9 5.5 Q7.5 11.5 13 15.5 Z" fill="#c8c8c8" stroke="#c8c8c8" stroke-width="1.3" stroke-linejoin="round"/></g></svg>
<svg class="a" style="left:375px;top:668px" width="30" height="30" viewBox="0 0 30 30"><circle cx="15" cy="15" r="14.5" fill="#23b0e8"/><path d="M25.3 4.7 A14.5 14.5 0 0 1 4.7 25.3 L9.7 20.3 A7.5 7.5 0 0 0 20.3 9.7 Z" fill="#0c4f7a"/><circle cx="15" cy="15" r="9" fill="#5ab552"/><path d="M6.3 17 A9 9 0 0 1 22.5 10 Q20 19 6.3 17 Z" fill="#fff"/></svg>
<svg class="a" style="left:1033px;top:680px" width="8" height="6" viewBox="0 0 8 6"><path d="M1 5 L4 1.5 L7 5 Z" fill="#f6f0e8"/></svg>
<svg class="a" style="left:1049px;top:676px" width="16" height="14" viewBox="0 0 16 14"><path d="M1 5 H4 L8 1.5 V12.5 L4 9 H1 Z" fill="#f6f0e8"/><path d="M10 4.5 Q11.5 7 10 9.5 M12 3 Q14.5 7 12 11" fill="none" stroke="#f6f0e8" stroke-width="1.2"/></svg>
<svg class="a" style="left:1074px;top:675px" width="14" height="15" viewBox="0 0 14 15"><path d="M2 1 V14" stroke="#f6f0e8" stroke-width="1.5"/><path d="M2.5 2 H8 L9 3.5 H13 V9 H8 L7 7.5 H2.5 Z" fill="#f6f0e8"/></svg>
<svg class="a" style="left:1096px;top:674px" width="16" height="16" viewBox="0 0 16 16"><rect x="4" y="2" width="11" height="8" fill="none" stroke="#f6f0e8" stroke-width="1.3"/><path d="M9.5 10 V13 M6 14 H13" stroke="#f6f0e8" stroke-width="1.3"/><path d="M1 1 H6 V6 H1 Z" fill="#f6f0e8"/></svg>
<div class="t" style="left:1120px;top:677px;font-size:11px;color:#f6f0e8">ENG</div>
<div class="t" style="left:1170px;top:670px;font-size:11px;color:#f6f0e8">9:54</div>
<div class="t" style="left:1158px;top:686px;font-size:11px;color:#f6f0e8">17.06.2020</div>
</body></html>
